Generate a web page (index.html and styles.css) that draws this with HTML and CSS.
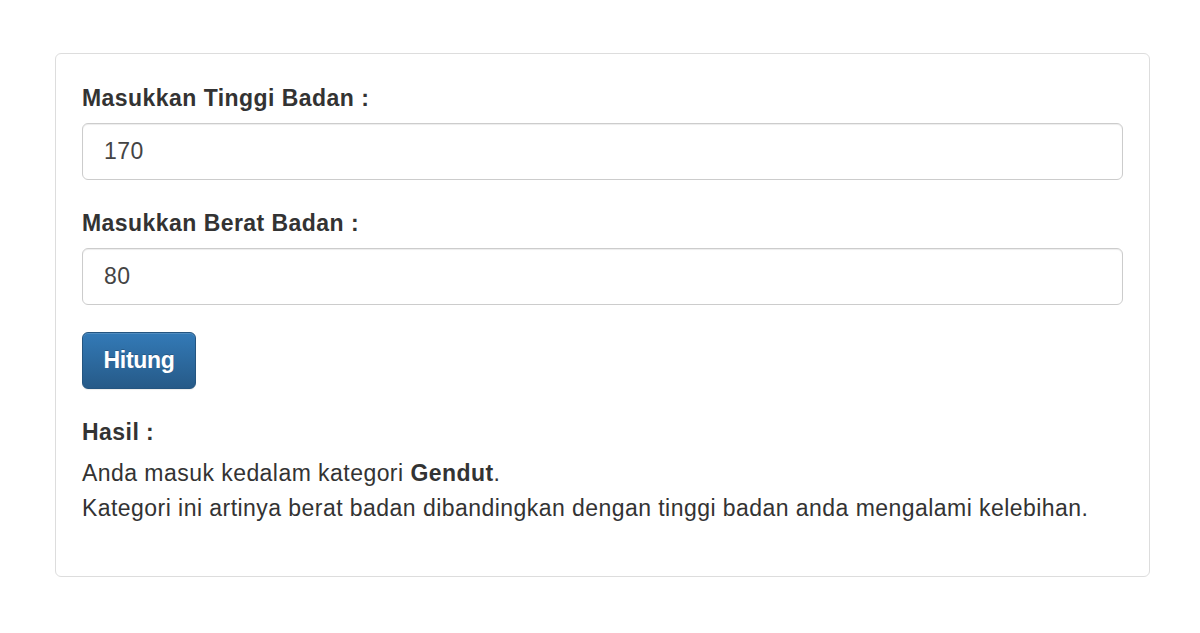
FILE: index.html
```html
<!DOCTYPE html>
<html lang="id">
<head>
    <meta charset="UTF-8">
    <meta name="viewport" content="width=device-width, initial-scale=1.0">
    <title>Hitung BMI</title>
    <link rel="stylesheet" href="styles.css">
</head>
<body>
    <div class="container">
        <div class="panel">
            <form class="bmi-form" onsubmit="return false;">
                <div class="form-group">
                    <label for="tinggi">Masukkan Tinggi Badan :</label>
                    <input type="text" id="tinggi" class="form-control" value="170">
                </div>

                <div class="form-group">
                    <label for="berat">Masukkan Berat Badan :</label>
                    <input type="text" id="berat" class="form-control" value="80">
                </div>

                <button type="submit" class="btn-primary">Hitung</button>
            </form>

            <div class="result">
                <h4>Hasil :</h4>
                <p>
                    Anda masuk kedalam kategori <strong>Gendut</strong>.<br>
                    Kategori ini artinya berat badan dibandingkan dengan tinggi badan anda mengalami kelebihan.
                </p>
            </div>
        </div>
    </div>
</body>
</html>
```

FILE: styles.css
```css
* {
    margin: 0;
    padding: 0;
    box-sizing: border-box;
}

body {
    font-family: 'Liberation Sans', Arial, Helvetica, sans-serif;
    font-size: 23px;
    line-height: 32px;
    letter-spacing: 0.45px;
    background-color: #fff;
    color: #333;
}

.container {
    padding: 53px 50px 0 55px;
}

.panel {
    background: #fff;
    border: 1px solid #ddd;
    border-radius: 6px;
    padding: 28px 26px 50px;
}

.form-group {
    margin-bottom: 27px;
}

.form-group label {
    display: block;
    font-weight: bold;
    margin-bottom: 9px;
}

.form-control {
    display: block;
    width: 100%;
    height: 57px;
    padding: 0 21px;
    font-family: inherit;
    font-size: 23px;
    letter-spacing: 0.45px;
    color: #444;
    background: #fff;
    border: 1px solid #ccc;
    border-radius: 6px;
    box-shadow: inset 0 1px 1px rgba(0,0,0,0.075);
}

.btn-primary {
    display: block;
    margin-top: 27px;
    width: 114px;
    height: 57px;
    font-family: inherit;
    font-size: 23px;
    font-weight: bold;
    letter-spacing: -0.3px;
    color: #fff;
    text-shadow: 0 -1px 0 rgba(0,0,0,0.2);
    background: linear-gradient(to bottom, #337ab7 0%, #265a88 100%);
    border: 1px solid #245580;
    border-radius: 6px;
    box-shadow: inset 0 1px 0 rgba(255,255,255,0.15), 0 1px 1px rgba(0,0,0,0.075);
    cursor: pointer;
}

.result {
    margin-top: 27px;
}

.result h4 {
    font-size: 23px;
    font-weight: bold;
    margin-bottom: 8px;
}

.result p {
    line-height: 35px;
}
```
